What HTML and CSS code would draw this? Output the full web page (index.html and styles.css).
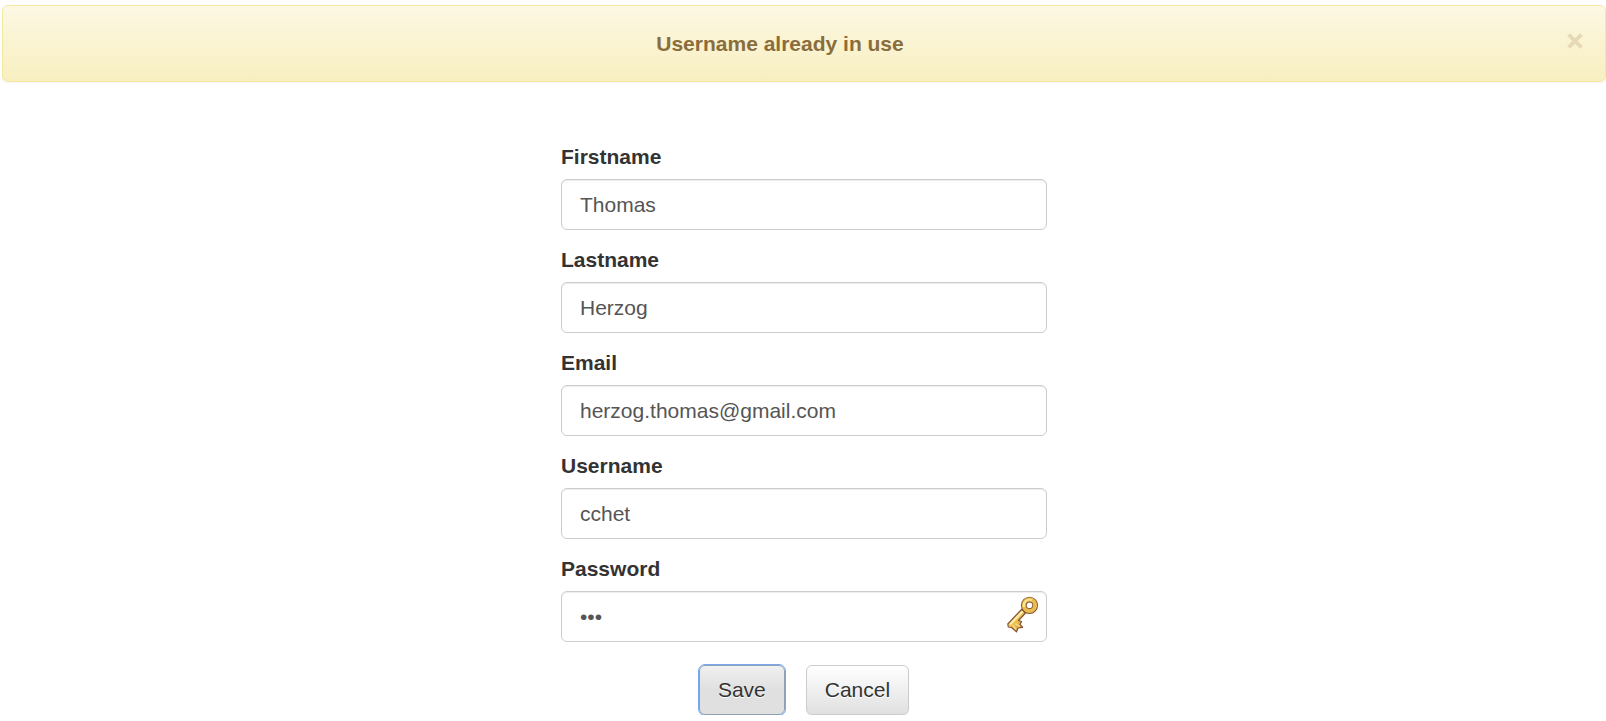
FILE: index.html
```html
<!DOCTYPE html>
<html lang="en">
<head>
<meta charset="utf-8">
<title>Register</title>
<link rel="stylesheet" href="styles.css">
</head>
<body>
<div class="alert" role="alert">
  <strong class="alert-text">Username already in use</strong>
  <button class="close" type="button" aria-label="Close">
    <svg class="close-icon" viewBox="0 0 16 16" aria-hidden="true">
      <path d="M1.600 1.600 L14.400 14.400 M14.400 1.600 L1.600 14.400" stroke="#e6dab6" stroke-width="4"/>
    </svg>
  </button>
</div>
<form class="form">
  <div class="group">
    <label for="firstname">Firstname</label>
    <input class="control" id="firstname" type="text" value="Thomas">
  </div>
  <div class="group">
    <label for="lastname">Lastname</label>
    <input class="control" id="lastname" type="text" value="Herzog">
  </div>
  <div class="group">
    <label for="email">Email</label>
    <input class="control" id="email" type="email" value="herzog.thomas@gmail.com">
  </div>
  <div class="group">
    <label for="username">Username</label>
    <input class="control" id="username" type="text" value="cchet">
  </div>
  <div class="group">
    <label for="password">Password</label>
    <div class="password">
      <input class="control" id="password" type="password" value="abc">
      <svg class="key" viewBox="0 0 32 38" aria-hidden="true">
        <defs>
          <linearGradient id="gold" x1="0" y1="0" x2="1" y2="1">
            <stop offset="0" stop-color="#f8dc78"/>
            <stop offset=".55" stop-color="#e9bd4c"/>
            <stop offset="1" stop-color="#c98a30"/>
          </linearGradient>
        </defs>
        <path d="M14.500 13.500 L.8 28 L1.300 31 L4.500 31.500 L9.500 35.800 L11 32 L15.800 31.300 L13 28.500 L14.500 25.500 L11.500 24.500 L18.500 17 Z" fill="url(#gold)" stroke="#865334" stroke-width="1.200" stroke-linejoin="round"/>
        <path d="M15.800 15.200 L3 28.600" stroke="#ffeeb0" stroke-width="2"/>
        <path d="M6 29.500 L9 33.500 M8.500 28 L13 30.400" stroke="#f9d887" stroke-width="1.500"/>
        <circle cx="22.500" cy="9.300" r="5.700" fill="none" stroke="#865334" stroke-width="5.800"/>
        <circle cx="22.500" cy="9.300" r="5.700" fill="none" stroke="#e8bd4e" stroke-width="4"/>
        <path d="M17 11 A5.800 5.800 0 0 1 25 4.200" fill="none" stroke="#fbe69a" stroke-width="1.800"/>
      </svg>
    </div>
  </div>
  <div class="actions">
    <button class="btn btn-focus" type="button">Save</button>
    <button class="btn" type="button">Cancel</button>
  </div>
</form>
</body>
</html>
```
FILE: styles.css
```css
* {
  box-sizing: border-box;
}

body {
  margin: 5px 0 0 2px;
  background: #fff;
  color: #333;
  font: 21px/30px "Liberation Sans", Arial, sans-serif;
}

.alert {
  display: flex;
  align-items: flex-start;
  padding: 23px 22px 22px;
  border: 1px solid #f5e79e;
  border-radius: 6px;
  background: linear-gradient(#fcf8e3, #f8efc0);
  box-shadow: inset 0 1px 0 rgba(255, 255, 255, .25), 0 1px 2px rgba(0, 0, 0, .05);
  color: #8a6d3b;
  text-shadow: 0 1px 0 rgba(255, 255, 255, .2);
}

.alert-text {
  flex: 1;
  padding-right: 32px;
  text-align: center;
}

.close {
  padding: 4px 0;
  border: 0;
  background: none;
}

.close-icon {
  display: block;
  width: 16px;
  height: 16px;
  overflow: visible;
}

.form {
  width: 486px;
  max-width: 100%;
  margin: 60px auto 0;
}

.group {
  margin-bottom: 15px;
}

.group label {
  display: block;
  margin-bottom: 7px;
  font-weight: bold;
}

.control {
  display: block;
  width: 100%;
  height: 51px;
  padding: 8px 18px;
  border: 1px solid #ccc;
  border-radius: 6px;
  background: #fff;
  box-shadow: inset 0 1px 1px rgba(0, 0, 0, .075);
  color: #555;
  font: inherit;
}

.password {
  position: relative;
}

.key {
  position: absolute;
  top: 5px;
  right: 8px;
  width: 32px;
  height: 38px;
}

.actions {
  display: flex;
  justify-content: center;
  gap: 21px;
  padding-top: 8px;
}

.btn {
  height: 50px;
  padding: 0 18px;
  border: 1px solid #ccc;
  border-radius: 6px;
  background: linear-gradient(#fff, #e0e0e0);
  box-shadow: inset 0 1px 0 rgba(255, 255, 255, .15), 0 1px 1px rgba(0, 0, 0, .075);
  color: #333;
  font: inherit;
  text-shadow: 0 1px 0 #fff;
}

.btn-focus {
  border-color: #8f9fb5;
  background: linear-gradient(#f0f0f0, #e0e0e0 50%);
  outline: 1px solid #78a8f0;
}
```
